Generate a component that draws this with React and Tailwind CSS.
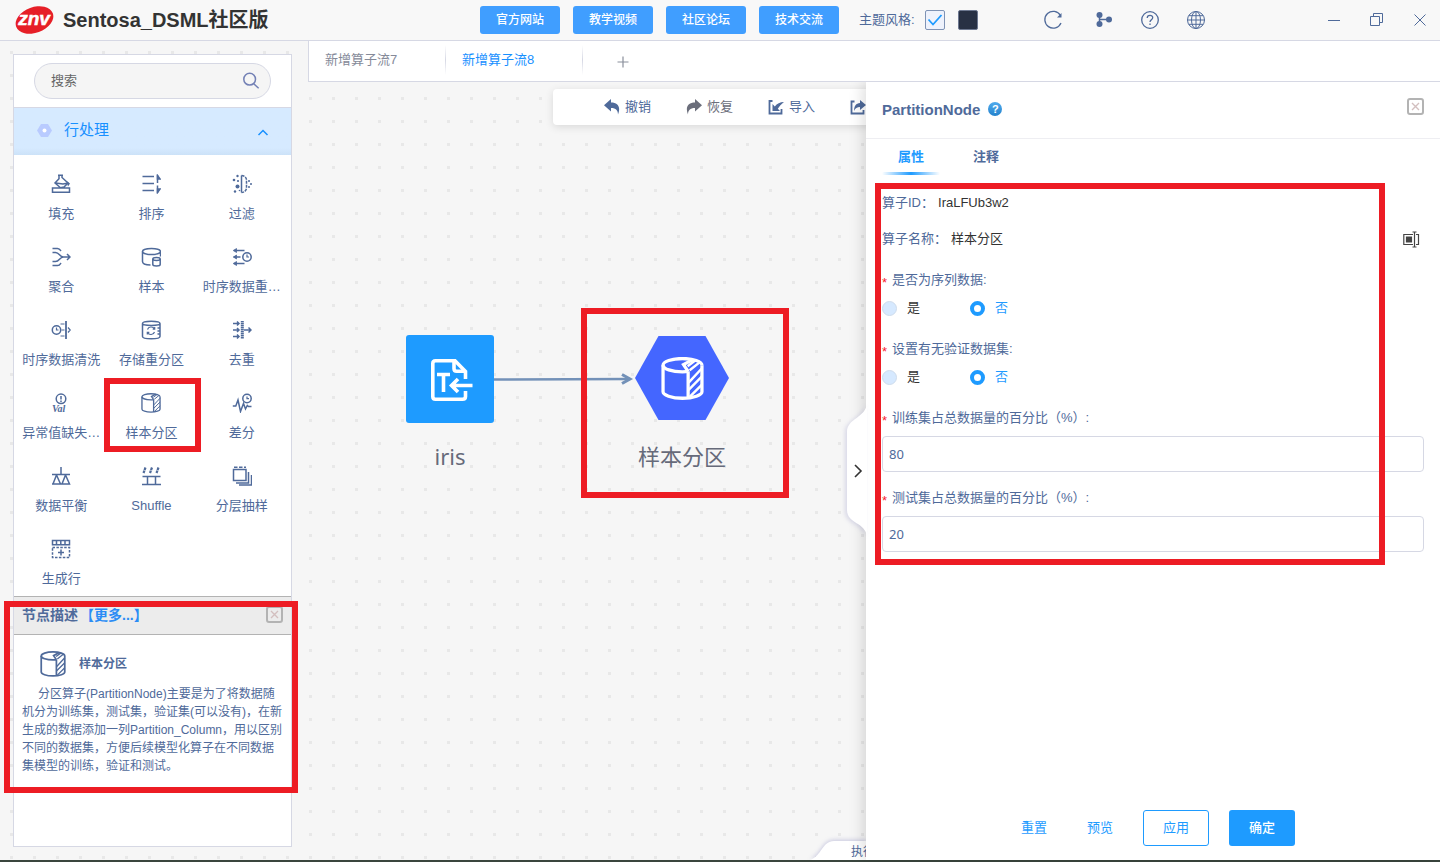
import React, { useState } from "react";

const LINKS = ["官方网站", "教学视频", "社区论坛", "技术交流"];

const Icon = ({ size = "size-5", box = 20, width = 1.5, children }) => (
  <svg className={`${size} shrink-0`} viewBox={`0 0 ${box} ${box}`} fill="none" stroke="currentColor" strokeWidth={width} aria-hidden="true">
    {children}
  </svg>
);

const PartitionIcon = ({ size, width }) => (
  <Icon size={size} box={42} width={width}>
    <path d="M40 8c0-3.600-8.500-6.500-19-6.500S2 4.400 2 8s8.500 6.500 19 6.500c2 0 4-.1 5.500-.4" />
    <path d="M2 8v26c0 3 8 6.300 19 6.300S40 37 40 34V8M26.500 14v26" />
    <path d="M26.500 14 22 7.500l9-5" />
    <path d="m26 9 8-6M28 13l10-8M27 25l13-14M27 32l13-13M28 39l12-12" strokeWidth={width * 0.75} />
  </Icon>
);

const NODES = [
  { label: "填充", icon: <Icon><path d="M1.500 14h17v4.200h-17zM7 1.200h5M8 1.500v3.300L4 9l5.500 4.800 3.500-.8L17 9l-6-5.500V1.500M4.500 9l7.500 1 5-1" /><path d="M15.500 7 19 9.500 17 12.500z" fill="currentColor" stroke="none" /></Icon> },
  { label: "排序", icon: <Icon><path d="M1.500 2.500H13M1.500 9.500H13M1.500 16.500H13M16.500 1v8M16.500 11.500v7.500" /><path d="M16.500 1.500 19 5h-2.500zM16.500 18.500 19 15h-2.500z" fill="currentColor" /></Icon> },
  { label: "过滤", icon: <Icon><path d="M9.500 1.500v17" /><path d="M9.500 1.500c3 0 5 2.500 5 4.500v8c0 2-2 4.500-5 4.500" strokeDasharray="3 1" /><g fill="currentColor" stroke="none"><circle cx="5.500" cy="2" r="1.200" /><circle cx="2" cy="6" r="1.300" /><circle cx="6" cy="7" r="1.100" /><circle cx="5.500" cy="12.500" r="2" /><circle cx="3" cy="17.500" r="1.200" /><circle cx="7.500" cy="16.500" r=".8" /><circle cx="17" cy="7" r="1" /><circle cx="19" cy="10" r="1" /><circle cx="17" cy="13" r="1" /></g></Icon> },
  { label: "聚合", icon: <Icon><path d="M1.500 1.500h5c2 0 2.500 1 3.500 2.500M1.500 5.500h3c4 0 4 4.500 8 4.500H19M1.500 14.500h3c4 0 4-4.500 8-4.500M1.500 18.500h5c2 0 2.500-1 3.500-2.500M16 7l3 3-3 3" /></Icon> },
  { label: "样本", icon: <Icon><ellipse cx="10.500" cy="4.500" rx="9" ry="3" /><path d="M1.500 4.500v10c0 2 3 3.500 8 3.500M19.500 4.500v5" /><ellipse cx="15.500" cy="12" rx="3.700" ry="1.500" /><path d="M11.800 12v5.500c0 2 7.400 2 7.400 0V12" /></Icon> },
  { label: "时序数据重…", icon: <Icon><path d="M1.500 3.500h11M1.500 10h7M1.500 16.500h11" /><path d="M4.500 1.500v4L1.500 3.500zM4.500 8v4l-3-2zM4.500 14.500v4l-3-2z" fill="currentColor" strokeWidth=".8" /><circle cx="15" cy="10" r="4.200" /><path d="M15 7.500V10h2" strokeWidth="1.200" /></Icon> },
  { label: "时序数据清洗", icon: <Icon><circle cx="5.500" cy="10" r="4.200" /><path d="M5.500 7.500V10h2M9.500 4h4M10.500 10h3M9.500 16h4M17 7.500l2.200 2.500L17 12.500" strokeWidth="1.200" /><path d="M15 1v18" strokeWidth="1.800" /></Icon> },
  { label: "存储重分区", icon: <Icon><path d="M1.500 3.500v13c0 3 17.500 3 17.500 0v-13c0-3-17.500-3-17.500 0 0 2.500 17.500 2.500 17.500 0M16.500 8H19M16.500 11H19M16.500 14H19" /><path d="M6.500 9.500c1-3 5.500-3.500 7-.5M13.500 12c-1 3-5.500 3.500-7 .5M13.700 7v2.200h-2M6.300 14.500v-2.200h2" strokeWidth="1.200" /></Icon> },
  { label: "去重", icon: <Icon><path d="M1 3.500h6M1 10h6M1 16.500h6M5 1.500l2 2-2 2M5 8l2 2-2 2M5 14.500l2 2-2 2M12 10h7M16.500 7.500 19 10l-2.500 2.500" /><path d="M10.300 1v18" strokeWidth="3" strokeDasharray="1.500 .5" /></Icon> },
  { label: "异常值缺失…", icon: <Icon><circle cx="10" cy="5.800" r="4.800" /><path d="M10 3v3.500M10 7.500V9" /><text x="1" y="19" fontSize="10" fontStyle="italic" fontWeight="700" fontFamily="Liberation Serif, serif" fill="currentColor" stroke="none">Val</text></Icon> },
  { label: "样本分区", marked: true, icon: <PartitionIcon size="size-5" width={2.8} /> },
  { label: "差分", icon: <Icon><circle cx="15" cy="5.500" r="4.200" /><path d="M15 3.500v2.200h2" strokeWidth="1.200" /><path d="M.800 13h3L6 7l2.500 11.500 3-8 2 5.500 1.800-3.500 1.200 1h3" /></Icon> },
  { label: "数据平衡", icon: <Icon><path d="M10 1v7.500M1 8.500h18M5.500 9 2 18h7.500L5.500 9M14.500 9 11 18h7.500L14.500 9M1 18h18" /></Icon> },
  { label: "Shuffle", icon: <Icon><path d="M1.500 10.500h18M1 18.500h19M6.500 10.500v8M14.500 10.500v8" /><path d="M4.500 1.500 2.500 7M11 1.500 9 7M17.500 1.500l-2 5.500" strokeWidth="2.200" strokeDasharray="2.800 .500" /></Icon> },
  { label: "分层抽样", icon: <Icon><path d="M1.500 3.500H14v11H1.500zM4 17h12.500V6M7 19h12.500V9M2 1.200h3.500M7 1.200h3.500M12 1.200h2" /></Icon> },
  { label: "生成行", icon: <Icon><path d="M1.500 1.500h17v4.300h-17zM5.500 1.500v4M9.800 1.500v4M14 1.500v4M10 10.500v6M7 13.500h6" /><path d="M1.500 8.500h17v10h-17z" strokeDasharray="2.500 1.400" /></Icon> },
];

// Red frame that highlights a step of the walkthrough
const Marker = ({ className }) => (
  <div className={`pointer-events-none absolute z-30 border-6 border-[#ed1c24] ${className}`} />
);

const CloseBox = ({ label }) => (
  <button aria-label={label} className="shrink-0 text-[#b3b3b3]">
    <svg className="size-[17px]" viewBox="0 0 17 17" fill="none">
      <rect x="1" y="1" width="15" height="15" rx="2" stroke="currentColor" strokeWidth="2" />
      <path d="m5 5 7 7M12 5l-7 7" stroke="#d3bfbf" strokeWidth="1.400" />
    </svg>
  </button>
);

const Header = () => (
  <header className="flex h-[41px] shrink-0 items-center border-b border-[#d6d8e4] bg-[#f8f8f8] pb-px">
    <div className="flex w-1/3 shrink-0 items-center gap-2 pl-[14px]">
      <svg className="h-[30px] w-[41px]" viewBox="0 0 41 30" role="img" aria-label="znv">
        <ellipse cx="20.500" cy="15" rx="19.500" ry="12.800" transform="rotate(-20 20.500 15)" fill="#e61f27" />
        <text x="20" y="20" textAnchor="middle" fontSize="19" fontWeight="700" fontStyle="italic" fontFamily="Liberation Sans, sans-serif" fill="#fff" stroke="#fff" strokeWidth=".5">znv</text>
      </svg>
      <h1 className="text-xl font-bold text-[#333]">Sentosa_DSML社区版</h1>
    </div>
    <nav className="flex shrink-0 gap-[13px]">
      {LINKS.map((name) => (
        <button key={name} className="h-7 w-20 rounded-[3px] bg-[#409eff] text-xs font-medium text-white">{name}</button>
      ))}
    </nav>
    <div className="ml-5 flex shrink-0 items-center">
      <span>主题风格:</span>
      <label className="relative ml-[10px] flex">
        <input type="checkbox" defaultChecked aria-label="浅色主题" className="size-5 appearance-none rounded-[2px] border border-[#7f93b5] bg-[#eef2fc]" />
        <svg className="pointer-events-none absolute inset-0 size-5" viewBox="0 0 20 20" fill="none" stroke="#1e9bff" strokeWidth="1.800"><path d="m3.500 9.500 4.500 5 8.500-9.500" /></svg>
      </label>
      <button aria-label="深色主题" className="ml-[13px] size-5 rounded-[2px] border border-[#6d7890] bg-[#283144]" />
    </div>
    <div className="ml-[65px] flex shrink-0 items-center gap-[26px]">
      <button aria-label="刷新" className="mr-[5px]"><Icon width={1.3}><path d="M17.500 5.500A8.400 8.400 0 1 0 18 13" /><path d="M18.500 3v4.500H14z" fill="currentColor" stroke="none" /></Icon></button>
      <button aria-label="流程">
        <Icon>
          <path d="M5.500 5v10M5.500 9.500h9" />
          <g fill="currentColor" stroke="none"><circle cx="5.500" cy="5" r="3" /><circle cx="5.500" cy="14" r="3" /><circle cx="15" cy="9.500" r="3" /></g>
        </Icon>
      </button>
      <button aria-label="帮助"><Icon width={1.3}><circle cx="10" cy="10" r="8.300" /><path d="M7.200 8c0-3.700 5.800-3.500 5.500-.2-.2 1.900-2.700 2-2.700 4.200M10 13.500v1.500" /></Icon></button>
      <button aria-label="语言"><Icon width={1}><circle cx="10" cy="10" r="8.500" /><ellipse cx="10" cy="10" rx="4.500" ry="8.500" /><path d="M10 1.500v17M1.500 10h17M2.700 5.700h14.600M2.700 14.300h14.600" /></Icon></button>
    </div>
    <div className="ml-auto flex shrink-0 items-center gap-[27px] pr-[12px]">
      <button aria-label="最小化"><Icon size="size-4" box={16} width={1}><path d="M2 8.500h12" /></Icon></button>
      <button aria-label="还原"><Icon size="size-4" box={16} width={1}><path d="M1.500 4.500h9v9h-9zM4.500 4.500v-3h9v9h-3" /></Icon></button>
      <button aria-label="关闭"><Icon size="size-4" box={16} width={1}><path d="m2.500 2.500 11 11M13.500 2.500l-11 11" /></Icon></button>
    </div>
  </header>
);

const Sidebar = () => (
  <aside className="relative z-20 mt-[13px] mr-4 mb-[13px] ml-[13px] flex w-[279px] shrink-0 flex-col border border-[#d6d8e4] bg-white">
    <div className="mx-5 my-2 flex h-9 items-center rounded-full border border-[#d6d8e4] bg-[#f5f5f5] pr-[10px] pl-4">
      <input type="text" aria-label="搜索" placeholder="搜索" className="min-w-0 flex-1 bg-transparent outline-none placeholder:text-[#666]" />
      <button aria-label="搜索" className="text-[#7380b5]"><Icon size="size-[18px]" width={1.7}><circle cx="8.500" cy="8" r="6.500" /><path d="m13 13 5.500 5" /></Icon></button>
    </div>
    <button className="flex h-12 shrink-0 items-center border-t border-[#d6d8e4] bg-[#d6eaff] bg-linear-to-b from-[#d6eaff] from-85% to-[#cce2f8] pr-[22px] pb-0.5 pl-[23px] text-[15px] text-[#1890ff]">
      <svg className="mr-3 h-[13px] w-[15px]" viewBox="0 0 15 13"><path d="M4 0h7l4 6.500-4 6.500H4L0 6.500z" fill="#b9cbff" /><circle cx="7.500" cy="6.500" r="2" fill="#fff" /></svg>
      行处理
      <svg className="mt-1 ml-auto h-3 w-3" viewBox="0 0 12 12" fill="none" stroke="currentColor" strokeWidth="1.500"><path d="M1.500 8 6 3.500 10.500 8" /></svg>
    </button>
    <div className="grid grid-cols-3 pr-1 pb-[3px] pl-0.5">
      {NODES.map((node) => (
        <button key={node.label} className="relative flex h-[73px] flex-col items-center gap-[10px] pt-[19px] leading-5 whitespace-nowrap">
          {node.icon}
          {node.label}
          {node.marked && <Marker className="top-1 -left-0.5 h-[74px] w-[97px]" />}
        </button>
      ))}
    </div>
    <section className="relative border-t border-[#b3b3b3]">
      <div className="flex h-[38px] items-center border-b border-[#b3b3b3] bg-[#ececec] px-2 pb-0.5 text-sm font-bold">
        节点描述
        <a href="#more" className="ml-0.5 text-[#2b8cf5]">【更多...】</a>
        <span className="ml-auto flex"><CloseBox label="关闭描述" /></span>
      </div>
      <div className="px-2 pt-4 text-xs">
        <h2 className="flex items-center gap-[13px] pl-[18px] font-bold">
          <PartitionIcon size="size-[26px]" width={2.8} />
          样本分区
        </h2>
        <p className="mt-2 indent-4 leading-[18px]">
          分区算子(PartitionNode)主要是为了将数据随机分为训练集，测试集，验证集(可以没有)，在新生成的数据添加一列Partition_Column，用以区别不同的数据集，方便后续模型化算子在不同数据集模型的训练，验证和测试。
        </p>
      </div>
      <Marker className="top-1 -left-[10px] h-48 w-[294px]" />
    </section>
  </aside>
);

const TOOLS = [
  { label: "撤销", path: <path d="M7 0v3.500c7 0 10 4.500 7 12C14 11.500 12 9 7 9v3.500L0 6.300z" fill="currentColor" stroke="none" /> },
  { label: "恢复", dim: true, path: <path d="M9 0v3.500C2 3.500-1 8 2 15.500 2 11.500 4 9 9 9v3.500l7-6.200z" fill="currentColor" stroke="none" /> },
  { label: "导入", path: <><path d="M4.500 2H1.500v12.500h12V10" strokeWidth="1.800" /><path d="M4.500 5v7H12L9.800 9.800c1.700-2.800 3.200-4.300 6.200-6.800-4 0-7 1.500-9.200 4.500z" fill="currentColor" stroke="none" /></> },
];

const EDGE = "#7391b8";

const Canvas = () => (
  <div className="relative min-w-0 flex-1 overflow-hidden">
    <div className="absolute top-[7px] left-[245px] flex h-9 w-[560px] items-center gap-[30px] rounded bg-white pb-px pl-[51px] shadow-[0_2px_8px_rgba(0,0,0,0.12)]">
      {TOOLS.map((tool) => (
        <button key={tool.label} className={`flex w-[52px] shrink-0 items-center gap-[5px] ${tool.dim ? "text-[#6b6e7b]" : ""}`}>
          <Icon size="size-4" box={16}>{tool.path}</Icon>
          {tool.label}
        </button>
      ))}
      <button aria-label="导出">
        <Icon size="size-4" box={16}>
          <path d="M4.500 2.500H1.500v12h12V11" strokeWidth="1.800" />
          <path d="M10 1 16 6l-6 5V8c-3 0-4.500 1-6 4C4 7 6 4.200 10 4z" fill="currentColor" stroke="none" />
        </Icon>
      </button>
    </div>

    <svg className="absolute top-[288px] left-[186px] h-[18px] w-[142px]" viewBox="0 0 142 18" fill="none" stroke={EDGE}>
      <path d="M0 9.500 136 9" strokeWidth="2.600" />
      <path d="m128 4.500 8 4.500-8 4.500" strokeWidth="3" />
    </svg>

    <div className="absolute top-[253px] left-[98px] flex w-[88px] flex-col items-center">
      <div className="flex size-[88px] items-center justify-center rounded-[3px] bg-[#1e9bff] pt-0.5 pl-1 text-white">
        <Icon size="size-[42px]" box={42} width={3.6}>
          <path d="M34.500 20v-7.500L24 1.800H4.500Q1.800 1.800 1.800 4.500v33q0 2.700 2.700 2.700h27q3 0 3-2.700V32" />
          <path d="M23 2v7.500q0 2.700 2.700 2.700H34" />
          <path d="M6 15.500h13M12.500 15.500V33M41.500 26.500H21M27 20l-6.500 6.500L27 33" />
        </Icon>
      </div>
      <span className="mt-[17px] font-['Noto_Sans','Noto_Sans_CJK_SC',sans-serif] text-[22px] leading-8 text-[#666a7a]">iris</span>
    </div>

    <div className="absolute top-[254px] left-[327px] flex w-[94px] flex-col items-center">
      <div className="flex h-[84px] w-[94px] items-center justify-center bg-[#4466ff] text-white [clip-path:polygon(25%_0,75%_0,100%_50%,75%_100%,25%_100%,0_50%)]">
        <PartitionIcon size="size-[43px]" width={3.2} />
      </div>
      <span className="mt-[22px] text-[22px] leading-8 whitespace-nowrap text-[#666a7a]">样本分区</span>
      <Marker className="-top-7 -left-[54px] h-[190px] w-52" />
    </div>

    <div className="absolute right-0 bottom-0 h-6 w-16">
      <svg className="absolute right-0 bottom-0 h-6 w-16 drop-shadow-[0_-1px_2px_rgba(90,90,170,0.3)]" viewBox="0 0 64 24" fill="#fff"><path d="M8 24c12-4 12-19 24-19h32v19z" /></svg>
      <span className="relative block pt-2 pl-[49px] text-xs leading-4 whitespace-nowrap">执行</span>
    </div>
  </div>
);

const Star = () => <span className="h-5 w-[10px] shrink-0 leading-[26px] text-[#f5222d]" aria-hidden="true">*</span>;

const RadioField = ({ name, label }) => {
  const [value, setValue] = useState("否");
  return (
    <fieldset>
      <legend className="flex leading-5"><Star />{label}</legend>
      <div className="mt-2 flex gap-[50px] leading-5">
        {["是", "否"].map((option) => (
          <label key={option} className={`flex items-center gap-[10px] ${value === option ? "text-[#1e9bff]" : "text-[#333]"}`}>
            <input
              type="radio"
              name={name}
              checked={value === option}
              onChange={() => setValue(option)}
              className="size-[15px] appearance-none rounded-full border border-[#cfdcec] bg-[#d6e9ff] checked:border-4 checked:border-[#1e9bff] checked:bg-white"
            />
            {option}
          </label>
        ))}
      </div>
    </fieldset>
  );
};

const NumberField = ({ id, label, value }) => (
  <div>
    <label htmlFor={id} className="flex leading-5"><Star />{label}</label>
    <input
      id={id}
      type="text"
      defaultValue={value}
      className="mt-2 block h-9 w-full rounded border border-[#d6d8e4] bg-white px-[6px] font-['Noto_Sans',sans-serif] outline-none"
    />
  </div>
);

const Properties = () => (
  <aside className="relative z-10 flex w-[574px] shrink-0 flex-col bg-white shadow-[-3px_0_14px_rgba(0,0,0,0.14)]">
    <button aria-label="收起" className="absolute top-1/2 -left-[19px] h-[136px] w-5 -translate-y-1/2 text-[#333]">
      <svg className="h-[136px] w-5 drop-shadow-[-2px_1px_2px_rgba(80,80,160,0.18)]" viewBox="0 0 20 136" fill="#fff">
        <path d="M20 0c-1 15-20 15-20 29v78c0 14 19 12 20 27z" />
        <path d="m8 62 6 6-6 6" fill="none" stroke="currentColor" strokeWidth="1.600" />
      </svg>
    </button>
    <div className="flex h-[57px] shrink-0 items-center border-b border-[#eeeef2] pr-4 pl-4">
      <h2 className="text-[15px] font-bold">PartitionNode</h2>
      <button aria-label="说明" className="mb-0.5 ml-2 flex size-[14px] items-center justify-center rounded-full bg-linear-to-b from-[#4fabee] to-[#2282cc] text-[11px] leading-none font-bold text-white">?</button>
      <span className="mb-2 ml-auto flex"><CloseBox label="关闭" /></span>
    </div>
    <div className="flex shrink-0 gap-[18px] px-4 font-bold" role="tablist">
      <button role="tab" aria-selected="true" className="flex h-9 w-[58px] flex-col items-center justify-between pt-2 leading-5 text-[#1e9bff]">
        属性
        <span className="h-[3px] w-full rounded-full bg-linear-to-r from-transparent via-[#1e9bff] to-transparent" />
      </button>
      <button role="tab" aria-selected="false" className="flex h-9 w-14 justify-center pt-2 leading-5">注释</button>
    </div>
    <form className="relative flex flex-1 flex-col px-4 pt-[18px]" onSubmit={(e) => e.preventDefault()}>
      <p className="leading-5">算子ID：<span className="ml-1 text-[#333]">IraLFUb3w2</span></p>
      <div className="mt-4 flex items-center leading-5">
        算子名称：<span className="ml-1 text-[#333]">样本分区</span>
        <button type="button" aria-label="重命名" className="mr-1 ml-auto text-[#444]">
          <Icon size="size-[17px]" box={17} width={1.2}>
            <path d="M10 3.500H.800v10H10M13 3.500h2.500v10H13M11.500 1v15M9.500 1h4M9.500 16h4" />
            <path d="M3.500 6h5v5h-5z" fill="currentColor" />
          </Icon>
        </button>
      </div>
      <div className="mt-[21px] flex flex-col gap-[21px]">
        <RadioField name="sequence" label="是否为序列数据:" />
        <RadioField name="validation" label="设置有无验证数据集:" />
        <div className="flex flex-col gap-4">
          <NumberField id="train" label="训练集占总数据量的百分比（%）:" value="80" />
          <NumberField id="test" label="测试集占总数据量的百分比（%）:" value="20" />
        </div>
      </div>
      <Marker className="top-2 right-[55px] left-[9px] h-[382px]" />
      <div className="mt-auto flex justify-center pr-[10px] pb-[14px] text-[#1e9bff]">
        <button type="reset" className="h-9 w-[66px]">重置</button>
        <button type="button" className="h-9 w-[66px]">预览</button>
        <button type="button" className="ml-[10px] h-9 w-[66px] rounded-[3px] border border-[#1e9bff]">应用</button>
        <button type="submit" className="ml-5 h-9 w-[66px] rounded-[3px] bg-[#1e9bff] font-medium text-white">确定</button>
      </div>
    </form>
  </aside>
);

export default function App() {
  return (
    <div className="flex min-h-screen flex-col overflow-hidden bg-[#f6f6f6] font-['Liberation_Sans','Noto_Sans_CJK_SC',sans-serif] text-[13px] text-[#4f6a9a]">
      <Header />
      <div className="flex flex-1 bg-[radial-gradient(circle,#e8e8e8_1.500px,transparent_1.800px)] bg-size-[23px_23px]">
        <Sidebar />
        <main className="flex min-w-0 flex-1 flex-col">
          <div className="relative z-20 flex h-[41px] shrink-0 items-stretch border-b border-l border-[#d6d8e4] bg-white pb-0.5" role="tablist">
            <button role="tab" aria-selected="false" className="w-[136px] pl-4 text-left text-[#858a99]">新增算子流7</button>
            <span className="my-1 w-px bg-linear-to-b from-transparent via-[#d6d8e4] to-transparent" />
            <button role="tab" aria-selected="true" className="w-[136px] pl-4 text-left text-[#1890ff]">新增算子流8</button>
            <span className="my-1 w-px bg-linear-to-b from-transparent via-[#d6d8e4] to-transparent" />
            <button aria-label="新建" className="ml-[34px] pt-1 text-[#8a8f9c]"><Icon size="size-3" box={12} width={1.2}><path d="M6 .500v11M.500 6h11" /></Icon></button>
          </div>
          <div className="flex flex-1">
            <Canvas />
            <Properties />
          </div>
        </main>
      </div>
      <footer className="h-0.5 shrink-0 bg-[#3a463e]" />
    </div>
  );
}
